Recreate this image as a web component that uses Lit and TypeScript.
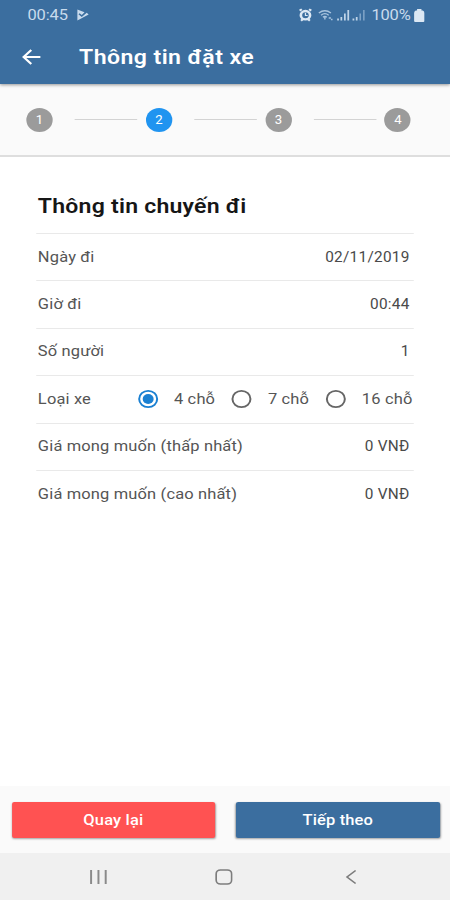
import { LitElement, html, css, svg } from "lit";
import { customElement, state } from "lit/decorators.js";

const fields = [
  { label: "Ngày đi", value: "02/11/2019" },
  { label: "Giờ đi", value: "00:44" },
  { label: "Số người", value: "1" },
];
const prices = [
  { label: "Giá mong muốn (thấp nhất)", value: "0 VNĐ" },
  { label: "Giá mong muốn (cao nhất)", value: "0 VNĐ" },
];

@customElement("app-root")
export class AppRoot extends LitElement {
  @state() seats = "4 chỗ";

  static styles = css`
    :host { display: block; width: 450px; height: 900px; overflow: hidden; background: #fff; }
    * { box-sizing: border-box; }
    .screen {
      width: 410px; height: 900px; display: flex; flex-direction: column;
      transform: scaleX(1.09756); transform-origin: 0 0;
      font-family: Roboto, "Liberation Sans", sans-serif; color: #555;
    }
    svg { display: block; flex: none; }
    .top { height: 84px; background: #3b6e9f; color: #fff; flex: none; box-shadow: 0 1px 3px rgba(0,0,0,.4); z-index: 1; }
    .status { height: 30px; padding: 0 23px 0 25px; display: flex; align-items: center; color: #c9dbed; font-size: 15px; }
    .time { letter-spacing: -.1px; width: 38px; }
    .play { margin-left: 7px; }
    .tray { margin-left: auto; display: flex; align-items: center; }
    .pct { margin: 0 3px 0 5.5px; letter-spacing: -.2px; }
    .bar { height: 53px; display: flex; align-items: center; padding-left: 19px; }
    .title { margin: 0 0 0 34px; font-size: 21px; font-weight: 600; letter-spacing: .4px; line-height: 28px; }
    .steps { height: 73px; flex: none; background: #fafafa; border-bottom: 2px solid #dedede; display: flex; align-items: center; padding: 0 35.5px 0 24px; }
    .dot { width: 24px; height: 24px; border-radius: 50%; background: #9b9b9b; color: #fff; font-size: 12px; line-height: 24px; text-align: center; flex: none; }
    .dot.on { background: #2094f0; }
    .line { flex: 1; height: 1.5px; background: #d3d3d3; margin: 0 7.5px 0 20px; }
    .body { flex: 1; padding: 0 33px; }
    h2 { margin: 0; height: 76px; padding: 35px 0 0 1.5px; font-size: 21px; line-height: 28px; font-weight: 600; letter-spacing: .2px; color: #161616; }
    .row { height: 47.4px; border-top: 1.5px solid #e9e9e9; display: flex; align-items: center; justify-content: space-between; padding: 0 4px 1px 1.5px; font-size: 15px; letter-spacing: .14px; }
    .value { font-size: 14px; letter-spacing: .25px; margin-right: -.25px; color: #4a4a4a; }
    .row.pick { padding: 0 0 0 1.5px; justify-content: flex-start; }
    .kind { flex: 0 0 90px; }
    .opt { display: flex; align-items: center; flex: 0 0 85.6px; white-space: nowrap; }
    .opt span { margin-left: 14px; }
    .foot { height: 67px; flex: none; background: #fafafa; display: flex; gap: 19px; padding: 16px 9.5px 15px 10.5px; }
    button { flex: 1; border: 0; padding: 0 0 1px; border-radius: 2px; font: 500 15px Roboto, sans-serif; letter-spacing: .15px; color: #fff; box-shadow: 0 1px 2px rgba(0,0,0,.35); }
    .back { background: #ff5252; }
    .next { background: #3b6e9f; }
    .nav { height: 47px; flex: none; background: #f0f0f0; display: flex; align-items: center; padding: 0 85.5px 0 82px; justify-content: space-between; }
    .home { margin-right: 4.5px; }
  `;

  private radio(label: string) {
    const on = this.seats === label;
    return html`<div class="opt" @click=${() => (this.seats = label)}>
      <svg width="20" height="20" viewBox="0 0 20 20" fill="none">
        <circle cx="10" cy="10" r="8.2" stroke=${on ? "#1a80d2" : "#666"} stroke-width="1.8" />
        ${on ? svg`<circle cx="10" cy="10" r="5" fill="#1a80d2" />` : ""}
      </svg><span>${label}</span></div>`;
  }

  render() {
    const row = (f: { label: string; value: string }) =>
      html`<div class="row"><span>${f.label}</span><span class="value">${f.value}</span></div>`;
    return html`<div class="screen">
      <header class="top">
        <div class="status">
          <span class="time">00:45</span>
          <svg class="play" width="11" height="12" viewBox="0 0 11 12">
            <path d="M.5 .5 7 3.3 4.5 6 2.5 4.2 1.5 5.2 4.5 8 9 3.8 10.8 5.5 .5 11.5Z" fill="#c9dbed" />
          </svg>
          <div class="tray">
            <svg width="61" height="14" viewBox="2 0 61 14">
              <circle cx="8.3" cy="7.2" r="4.2" fill="none" stroke="#dce8f4" stroke-width="2.4" />
              <path d="M3 2.6 5 1.2M11.6 1.2l2 1.4M4.3 12.8l1.5-1.5M12.3 12.8l-1.5-1.5" stroke="#dce8f4" stroke-width="2" />
              <path d="M8.3 4.8v2.7h2" fill="none" stroke="#dce8f4" stroke-width="1.1" />
              <g fill="none" stroke="#a9c5df" stroke-width="1.3">
                <path d="M20.5 5q5.5-4.5 11 0M22.5 7.2q3.5-3 7 0M24.2 9.2q1.8-1.4 3.6 0" />
                <path d="M26 9v2.5M29.5 10h2M31.5 11.5h1.5" />
              </g>
              <path d="M38 12.5v-2M41 12.5V9M44.2 12.5V5.5M47.3 12.5V2" stroke="#bfd4e8" stroke-width="1.6" />
              <path d="M52 12.5v-2M55 12.5V9" stroke="#bfd4e8" stroke-width="1.6" />
              <path d="M58.2 12.5V5.5M61.5 12.5V2" stroke="#7fa4c8" stroke-width="1.4" />
            </svg>
            <span class="pct">100%</span>
            <svg width="10" height="13" viewBox="0 0 10 13"><path d="M3 0h4v1.5h1.2Q9.7 2.2 9.7 4v8q0 1-1 1H1.3q-1 0-1-1V4Q.3 2.2 1.8 1.5H3Z" fill="#dce8f4" /></svg>
          </div>
        </div>
        <div class="bar">
          <svg width="19" height="18" viewBox="0 0 19 18" fill="none" stroke="#fff" stroke-width="2">
            <path d="M17.8 9H3M9.5 2 2.5 9l7 7" />
          </svg>
          <h1 class="title">Thông tin đặt xe</h1>
        </div>
      </header>
      <nav class="steps">
        ${[1, 2, 3, 4].map((n) => html`${n > 1 ? html`<div class="line"></div>` : ""}<div class="dot ${n === 2 ? "on" : ""}">${n}</div>`)}
      </nav>
      <main class="body">
        <h2>Thông tin chuyến đi</h2>
        ${fields.map(row)}
        <div class="row pick"><span class="kind">Loại xe</span>${["4 chỗ", "7 chỗ", "16 chỗ"].map((s) => this.radio(s))}</div>
        ${prices.map(row)}
      </main>
      <div class="foot"><button class="back">Quay lại</button><button class="next">Tiếp theo</button></div>
      <div class="nav">
        <svg width="16" height="16" viewBox="0 0 16 16" stroke="#8a8a8a" stroke-width="1.8"><path d="M1 1v14M7.7 1v14M14.3 1v14" /></svg>
        <svg class="home" width="16" height="16" viewBox="0 0 16 16" fill="none" stroke="#7d7d7d" stroke-width="1.6"><rect x=".9" y="1" width="14.2" height="14" rx="4" /></svg>
        <svg width="10" height="16" viewBox="0 0 10 16" fill="none" stroke="#7d7d7d" stroke-width="1.6"><path d="M9 1.5 1.2 8 9 14.5" /></svg>
      </div>
    </div>`;
  }
}
